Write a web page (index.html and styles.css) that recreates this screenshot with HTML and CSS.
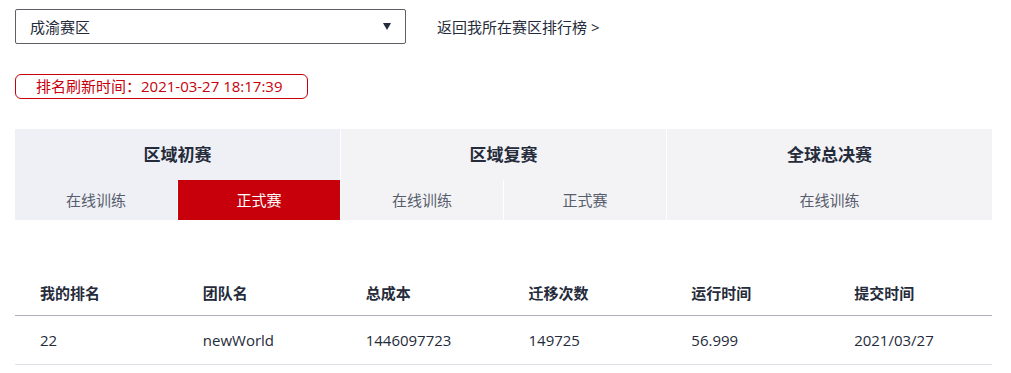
FILE: index.html
```html
<!DOCTYPE html>
<html lang="zh-CN">
<head>
  <meta charset="UTF-8">
  <meta name="viewport" content="width=device-width, initial-scale=1.0">
  <title>排行榜</title>
  <link rel="stylesheet" href="styles.css">
</head>
<body>
  <div class="page">
    <div class="top-bar">
      <div class="region-select">
        <span>成渝赛区</span>
        <span class="caret"></span>
      </div>
      <a class="back-link" href="#">返回我所在赛区排行榜 &gt;</a>
    </div>

    <div class="refresh-time">排名刷新时间：2021-03-27 18:17:39</div>

    <div class="stages">
      <div class="stage stage-current">
        <div class="stage-title">区域初赛</div>
        <div class="subs">
          <div class="sub">在线训练</div>
          <div class="sub sub-active">正式赛</div>
        </div>
      </div>
      <div class="stage">
        <div class="stage-title">区域复赛</div>
        <div class="subs">
          <div class="sub">在线训练</div>
          <div class="sub">正式赛</div>
        </div>
      </div>
      <div class="stage">
        <div class="stage-title">全球总决赛</div>
        <div class="subs">
          <div class="sub">在线训练</div>
        </div>
      </div>
    </div>

    <table class="rank-table">
      <thead>
        <tr>
          <th>我的排名</th>
          <th>团队名</th>
          <th>总成本</th>
          <th>迁移次数</th>
          <th>运行时间</th>
          <th>提交时间</th>
        </tr>
      </thead>
      <tbody>
        <tr>
          <td>22</td>
          <td>newWorld</td>
          <td>1446097723</td>
          <td>149725</td>
          <td>56.999</td>
          <td>2021/03/27</td>
        </tr>
      </tbody>
    </table>
  </div>
</body>
</html>
```

FILE: styles.css
```css
body {
  margin: 0;
  padding: 0;
  font-family: "Open Sans", "Noto Sans CJK SC", sans-serif;
  font-size: 16px;
  color: #252b3a;
  background-color: white;
}
.page {
  padding: 9px 0 0 15px;
  width: 977px;
}
.top-bar {
  display: flex;
  align-items: center;
}
.region-select {
  box-sizing: border-box;
  width: 391px;
  height: 35px;
  border: 1px solid #5e6066;
  border-radius: 2px;
  padding: 0 14px 0 14px;
  display: flex;
  align-items: center;
  justify-content: space-between;
  font-size: 15px;
}
.caret {
  width: 0;
  height: 0;
  border-left: 4px solid transparent;
  border-right: 4px solid transparent;
  border-top: 7px solid #252b3a;
}
.back-link {
  margin-left: 31px;
  color: #252b3a;
  text-decoration: none;
  font-size: 15px;
}
.refresh-time {
  display: block;
  box-sizing: border-box;
  margin-top: 30px;
  width: 293px;
  height: 25px;
  line-height: 23px;
  border: 1px solid #c7000b;
  border-radius: 6px;
  padding-left: 20px;
  color: #c7000b;
  font-size: 15px;
}
.stages {
  display: flex;
  gap: 1px;
  margin-top: 30px;
}
.stage {
  flex: 1;
  background-color: #f3f3f6;
}
.stage-current {
  background-color: #eef0f5;
}
.stage-title {
  height: 51px;
  line-height: 51px;
  text-align: center;
  font-size: 17px;
  font-weight: bold;
}
.subs {
  display: flex;
  gap: 1px;
  background-color: white;
}
.sub {
  flex: 1;
  height: 40px;
  line-height: 40px;
  text-align: center;
  color: #575d6c;
  font-size: 15px;
  background-color: #eef0f5;
}
.stage:not(.stage-current) .sub {
  background-color: #f3f3f6;
}
.sub-active {
  background-color: #c7000b !important;
  color: white;
}
.rank-table {
  width: 977px;
  margin-top: 50px;
  border-collapse: collapse;
  table-layout: fixed;
}
.rank-table th,
.rank-table td {
  text-align: left;
  padding: 0 0 0 25px;
  font-size: 15px;
}
.rank-table th {
  height: 45px;
  font-weight: bold;
  border-bottom: 1px solid #adb0b8;
}
.rank-table td {
  height: 47px;
  padding-bottom: 1px;
  border-bottom: 1px solid #dfe1e6;
}
```
